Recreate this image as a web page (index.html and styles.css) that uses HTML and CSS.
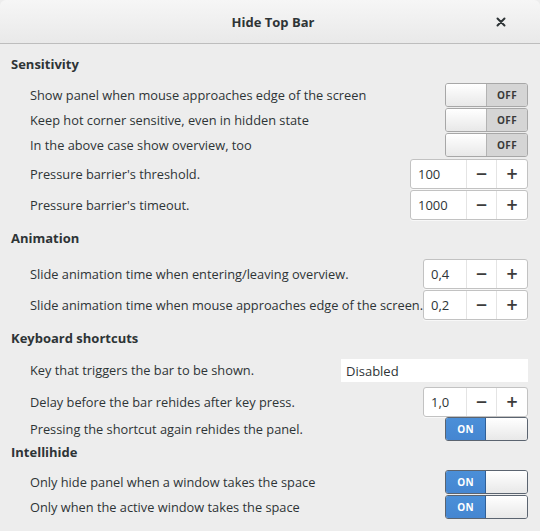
FILE: index.html
```html
<!DOCTYPE html>
<html>
<head>
<meta charset="utf-8">
<link rel="stylesheet" href="styles.css">
</head>
<body>
<div class="window">
  <header class="titlebar">
    <div class="title">Hide Top Bar</div>
    <div class="close">
      <svg width="10" height="10" viewBox="0 0 10 10"><path d="M1.5 1.5 L8.5 8.5 M8.5 1.5 L1.5 8.5" stroke="#2e3436" stroke-width="2" stroke-linecap="round"/></svg>
    </div>
  </header>
  <main class="content">
    <h2 class="heading h-sens">Sensitivity</h2>
    <div class="row r-switch">
      <span class="label">Show panel when mouse approaches edge of the screen</span>
      <div class="switch off"><span class="knob"></span><span class="state">OFF</span></div>
    </div>
    <div class="row r-switch">
      <span class="label">Keep hot corner sensitive, even in hidden state</span>
      <div class="switch off"><span class="knob"></span><span class="state">OFF</span></div>
    </div>
    <div class="row r-switch">
      <span class="label">In the above case show overview, too</span>
      <div class="switch off"><span class="knob"></span><span class="state">OFF</span></div>
    </div>
    <div class="row r-spin">
      <span class="label">Pressure barrier's threshold.</span>
      <div class="spin wide"><span class="value">100</span><span class="btn">−</span><span class="btn">+</span></div>
    </div>
    <div class="row r-spin">
      <span class="label">Pressure barrier's timeout.</span>
      <div class="spin wide"><span class="value">1000</span><span class="btn">−</span><span class="btn">+</span></div>
    </div>

    <h2 class="heading h-anim">Animation</h2>
    <div class="row r-spin">
      <span class="label">Slide animation time when entering/leaving overview.</span>
      <div class="spin"><span class="value">0,4</span><span class="btn">−</span><span class="btn">+</span></div>
    </div>
    <div class="row r-spin">
      <span class="label">Slide animation time when mouse approaches edge of the screen.</span>
      <div class="spin"><span class="value">0,2</span><span class="btn">−</span><span class="btn">+</span></div>
    </div>

    <h2 class="heading h-keys">Keyboard shortcuts</h2>
    <div class="row r-entry">
      <span class="label">Key that triggers the bar to be shown.</span>
      <div class="entry">Disabled</div>
    </div>
    <div class="row r-spin">
      <span class="label">Delay before the bar rehides after key press.</span>
      <div class="spin"><span class="value">1,0</span><span class="btn">−</span><span class="btn">+</span></div>
    </div>
    <div class="row r-switch">
      <span class="label">Pressing the shortcut again rehides the panel.</span>
      <div class="switch on"><span class="state">ON</span><span class="knob"></span></div>
    </div>

    <h2 class="heading h-intel">Intellihide</h2>
    <div class="row r-switch">
      <span class="label">Only hide panel when a window takes the space</span>
      <div class="switch on"><span class="state">ON</span><span class="knob"></span></div>
    </div>
    <div class="row r-switch">
      <span class="label">Only when the active window takes the space</span>
      <div class="switch on"><span class="state">ON</span><span class="knob"></span></div>
    </div>
  </main>
</div>
</body>
</html>
```
FILE: styles.css
```css
* { box-sizing: border-box; }
html, body { margin: 0; padding: 0; }
body {
  width: 540px;
  height: 531px;
  background: #ededed;
  font-family: "Open Sans", "Noto Sans", sans-serif;
  font-size: 12.8px;
  color: #2e3436;
  overflow: hidden;
}
.window { width: 540px; height: 531px; background: #ededed; }

.titlebar {
  height: 44px;
  background: linear-gradient(#f6f6f6, #e9e9e9);
  border-bottom: 1px solid #bdbdbd;
  border-radius: 6px 6px 0 0;
  display: flex;
  align-items: center;
  justify-content: center;
  position: relative;
}
.title { font-weight: bold; font-size: 13px; padding-left: 6px; }
.close {
  position: absolute;
  right: 34px;
  top: 17px;
  width: 10px;
  height: 10px;
  display: flex;
}

.content { padding: 0 12px 0 11px; }

.heading {
  margin: 0;
  font-size: 13px;
  font-weight: bold;
  line-height: 20px;
  height: 20px;
}
.h-sens { margin-top: 10px; margin-bottom: 9px; }
.h-anim { margin-top: 8px; margin-bottom: 10px; }
.h-keys { margin-top: 8px; margin-bottom: 11px; }
.h-intel { margin-top: 0; margin-bottom: 8px; }

.row {
  display: flex;
  align-items: center;
  justify-content: space-between;
  padding-left: 19px;
}
.r-switch { height: 25px; align-items: flex-start; }
.r-switch .label { line-height: 24px; }
.r-spin { height: 31px; }
.r-entry { height: 27px; align-items: flex-start; }
.r-entry .label { line-height: 23px; }
.label { white-space: nowrap; }

.switch {
  flex-shrink: 0;
  width: 83px;
  height: 24px;
  border: 1px solid #a7a7a7;
  border-radius: 3px;
  display: flex;
  overflow: hidden;
  font-size: 10px;
  font-weight: bold;
  letter-spacing: 0.3px;
}
.switch .knob {
  width: 41px;
  background: linear-gradient(#ffffff, #e8e8e8);
}
.switch .state {
  flex: 1;
  display: flex;
  align-items: center;
  justify-content: center;
}
.switch.off .knob { border-right: 1px solid #b3b3b3; }
.switch.off .state { background: #d5d5d5; color: #3a3a3a; }
.switch.on { border-color: #5b6470; }
.switch.on .state {
  background: linear-gradient(#4b8fd8, #4586d1);
  color: #ffffff;
  border-right: 1px solid #2f5f97;
}

.spin {
  flex-shrink: 0;
  width: 105px;
  height: 30px;
  border: 1px solid #c2c2c2;
  border-radius: 3px;
  background: #ffffff;
  display: flex;
  box-shadow: 0 1px 0 rgba(255,255,255,0.6);
}
.spin.wide { width: 118px; }
.spin .value {
  flex: 1;
  display: flex;
  align-items: center;
  padding-left: 7px;
  font-size: 13px;
}
.spin .btn {
  width: 30px;
  display: flex;
  align-items: center;
  justify-content: center;
  border-left: 1px solid #e4e4e4;
  font-size: 15px;
  font-weight: bold;
  color: #3c3c3c;
  font-family: "DejaVu Sans", sans-serif;
}
.spin .btn:last-child { width: 31px; }

.entry {
  flex-shrink: 0;
  width: 187px;
  height: 23px;
  background: #ffffff;
  display: flex;
  align-items: center;
  padding-left: 5px;
  font-size: 13px;
}
```
